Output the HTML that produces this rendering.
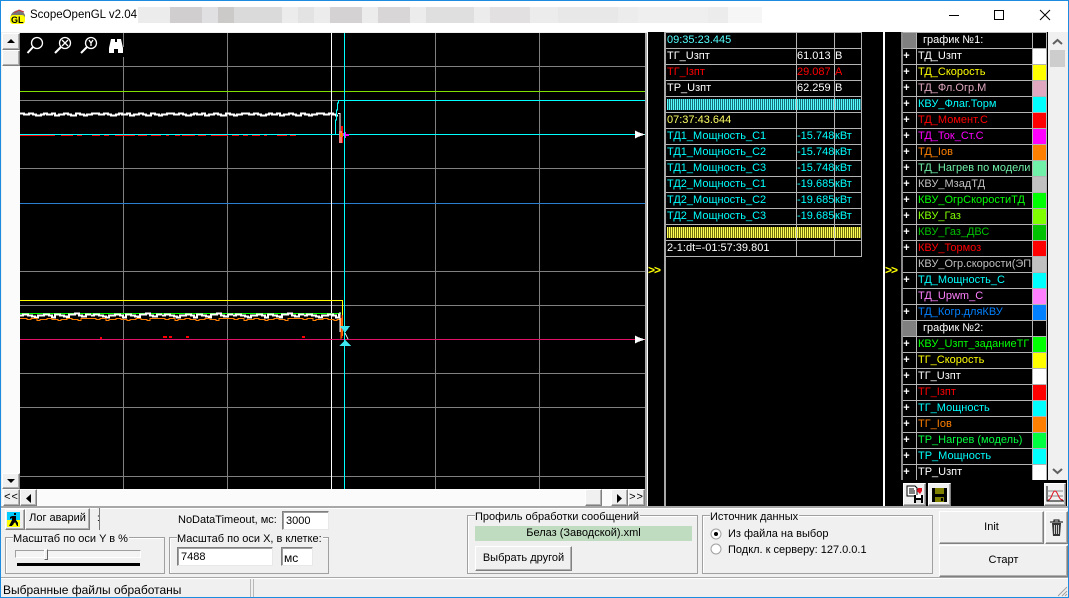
<!DOCTYPE html>
<html lang="ru"><head><meta charset="utf-8"><title>ScopeOpenGL v2.04</title>
<style>
html,body{margin:0;padding:0;background:#f0f0f0}
body{width:1069px;height:598px;position:relative;overflow:hidden;font:11px/14px "Liberation Sans",sans-serif;color:#000}
.a{position:absolute;white-space:nowrap}
.b{position:absolute;box-sizing:border-box;background:#f0f0f0;border:1px solid;border-color:#fff #808080 #808080 #fff;box-shadow:inset -1px -1px 0 #b0b0b0;text-align:center;white-space:nowrap}
.e{position:absolute;box-sizing:border-box;background:#fff;border:1px solid;border-color:#808080 #e8e8e8 #e8e8e8 #808080;box-shadow:inset 1px 1px 0 #a0a0a0;padding:2px 0 0 3px;white-space:nowrap}
.g{position:absolute;box-sizing:border-box;border:1px solid #a0a0a0;box-shadow:inset 1px 1px 0 #fff}
.l{position:absolute;background:#f0f0f0;white-space:nowrap;line-height:12px;padding-right:1px}
#t,#p{position:absolute;background:#000;color:#fff;font-size:11px;line-height:15px}
.r{position:absolute;left:0;right:0;height:15px;border-bottom:1px solid #b4b4b4;white-space:nowrap;overflow:hidden}
.r span{position:absolute;top:0;height:15px;overflow:hidden}
.vl{position:absolute;top:0;bottom:0;width:1px;background:#b4b4b4}
.cy{color:#0ff}
.hc{background:linear-gradient(90deg,#5ff 50%,#1a7078 50%) 0 0/2px 100%}
.hy{background:linear-gradient(90deg,#ff5 50%,#707010 50%) 0 0/2px 100%}
.n{left:15px;width:114px}
.k{left:0;width:7px;text-align:center;font-weight:bold;color:#fff}
.c{left:130px;width:13px;height:15px}
</style></head><body>

<!-- window frame -->
<div class="a" style="left:0;top:0;width:1069px;height:32px;background:#fff"></div>
<svg class="a" style="left:9px;top:7px" width="18" height="17" viewBox="0 0 18 17"><path d="M2 14A7 7 0 0 1 16 8L16 14Z" fill="#777"/><path d="M5 6l5-3 5 2" stroke="#c33" fill="none"/><rect x="1" y="8" width="15" height="9" rx="3" fill="#ff0"/><text x="2" y="16" font-family="Liberation Sans" font-size="9" font-weight="bold" fill="#000">GL</text></svg>
<div class="a" style="left:30px;top:8px;font-size:11.500px;line-height:15px">ScopeOpenGL v2.04</div>
<svg class="a" style="left:138px;top:7px" width="624" height="16"><rect width="624" height="16" fill="#ececec"/><rect x="32" width="32" height="16" fill="#d0cece"/><rect x="64" width="16" height="16" fill="#e0e0e2"/><rect x="80" width="16" height="16" fill="#ccc9c9"/><rect x="96" width="48" height="16" fill="#dbdada"/><rect x="160" width="16" height="16" fill="#e3e3e3"/><rect x="192" width="32" height="16" fill="#d4d2d2"/><rect x="240" width="32" height="16" fill="#d8d6d6"/><rect x="288" width="48" height="16" fill="#dfdfdf"/><rect x="352" width="40" height="16" fill="#e2e0e0"/><rect x="420" width="60" height="16" fill="#e8e8e8"/><rect x="500" width="70" height="16" fill="#efefef"/><rect x="590" width="34" height="16" fill="#f6f6f6"/></svg>
<svg class="a" style="left:940px;top:5px" width="120" height="22" fill="none" stroke="#000"><path d="M9 10.500H19"/><rect x="54.500" y="5.500" width="9" height="9"/><path d="M100 5L110 15M110 5L100 15"/></svg>

<!-- plot -->
<svg class="a" style="left:20px;top:33px;background:#000;shape-rendering:crispEdges" width="625" height="456" viewBox="20 33 625 456">
<g stroke="#808080" fill="none">
<path d="M20 66.500H645M20 100.500H340M20 168.500H645M20 271.500H645M20 305.500H645M20 373.500H645M20 407.500H645M20 476.500H645"/>
<path d="M123.500 33V489M227.500 33V489M435.500 33V489M539.500 33V489"/>
</g>
<rect x="122" y="47" width="3" height="10" fill="#000"/>
<path d="M20 91.500H645" stroke="#80e000"/>
<path d="M20 203.500H645" stroke="#2a7fd0"/>
<path d="M331.500 33V489" stroke="#fff"/>
<path d="M20 300.500H342.500V336" stroke="#ff0" fill="none"/>
<path d="M20 313.500H341" stroke="#0f0"/>
<defs>
<path id="n1" d="M0 113.500h4v1h5v-1h4v1h3v1h5v-1h3v-1h3v1h5v-1h3v2h4v-1h5v-1h4v1h3v1h5v-2h4v1h4v1h3v-1h5v-1h3"/>
<path id="n2" d="M0 315.500h3v-1h5v1h4v1h3v1h3v-2h6v-1h5v1h3v2h3v-3h5v1h4v1h3v1h2v-3h6v-1h4v2h3v1h4v-2h5"/>
<path id="n3" d="M0 318.500h7v1h4v-1h6v2h3v-1h7v-1h5v1h6v1h3v-1h6v-1h5v1h6v1h3v-2h8"/>
<clipPath id="cl"><rect x="20" y="300" width="320" height="30"/></clipPath>
<clipPath id="ct"><rect x="20" y="100" width="318" height="30"/></clipPath>
</defs>
<g fill="none" stroke="#fff" stroke-width="2" clip-path="url(#ct)">
<use href="#n1" x="20"/><use href="#n1" x="95"/><use href="#n1" x="170"/><use href="#n1" x="245"/><use href="#n1" x="320"/>
</g>
<g clip-path="url(#cl)">
<g fill="none" stroke="#fff" stroke-width="2">
<use href="#n2" x="20"/><use href="#n2" x="91"/><use href="#n2" x="162"/><use href="#n2" x="233"/><use href="#n2" x="304"/>
</g>
<g fill="none" stroke="#ff8000">
<use href="#n3" x="20"/><use href="#n3" x="89"/><use href="#n3" x="158"/><use href="#n3" x="227"/><use href="#n3" x="296"/>
</g>
</g>
<path d="M338 113.500h2V134" stroke="#fff" fill="none"/>
<path d="M340 312V332" stroke="#fff" fill="none"/>
<path d="M20 135.500h35m6 0h12m4 0h5m10 0h8m4 0h5m6 0h20m3 0h9m4 0h10m5 0h3m6 0h5m2 0h13m3 0h8m5 0h17m4 0h7m4 0h5m4 0h8m4 0h3m10 0h10m3 0h6" stroke="#f00" fill="none"/>
<path d="M100 338h2m61-1h4m2 0h3m14 0h3m113 0h3" stroke="#f00" stroke-width="2" fill="none"/>
<path d="M20 339.500H645" stroke="#e0106a"/>
<path d="M20 134.500H645M339 100.500H645" stroke="#0ff"/>
<path d="M335.500 134V120h1v-10h1V103h1v-3" stroke="#0ff" fill="none"/>
<path d="M341 126h2v17h-2z" fill="#f00"/>
<path d="M339 131h3v12h-3z" fill="#f08080"/>
<path d="M340 133h3v4h-3z" fill="#ff8000"/>
<path d="M343 133h2v-1h1v2h3v2h-3v2h-1v-2h-2z" fill="#f0f"/>
<path d="M342 315v23" stroke="#f00" fill="none"/>
<path d="M341 318v21" stroke="#ff8000" fill="none"/>
<path d="M344.500 33V489" stroke="#0ff"/>
<path d="M340 326H350L345 333Z" fill="#3fe8f0"/>
<path d="M345 340L351 346H339Z" fill="#3fe8f0"/>
<path d="M635 130.500l4 2 6 2-6 2-4 2Z" fill="#fff"/>
<path d="M635 335.500l4 2 6 2-6 2-4 2Z" fill="#fff"/>
<path d="M345 333l3 6" stroke="#fff"/>
</svg>
<svg class="a" style="left:26px;top:36px" width="102" height="20" fill="none" stroke="#fff" stroke-width="1.300">
<circle cx="11" cy="7" r="5.500"/><path d="M7 11L1.500 17" stroke-width="2"/>
<circle cx="39" cy="7" r="5.500"/><path d="M35 11L29 17" stroke-width="2"/><path d="M36 4l6 6M42 4l-6 6"/>
<circle cx="65" cy="7" r="5.500"/><path d="M61 11L55 17" stroke-width="2"/><path d="M63 4l2 3 2-3M65 7v3"/>
<path d="M85 3h4v3h2V3h4l2 9v5h-5v-4h-4v4h-5v-5Z" fill="#fff" stroke="none"/>
</svg>

<!-- left scrollbar -->
<div class="a" style="left:2px;top:33px;width:18px;height:456px;background:#fbfbfb"></div>
<div class="b" style="left:2px;top:33px;width:18px;height:17px"></div>
<svg class="a" style="left:6px;top:38px" width="10" height="6"><path d="M1 5H9L5 1Z"/></svg>
<div class="b" style="left:2px;top:50px;width:18px;height:16px"></div>
<div class="b" style="left:2px;top:473px;width:18px;height:16px"></div>
<svg class="a" style="left:6px;top:478px" width="10" height="6"><path d="M1 1H9L5 5Z"/></svg>

<!-- bottom scrollbar -->
<div class="a" style="left:2px;top:489px;width:643px;height:17px;background:#fbfbfb"></div>
<div class="b" style="left:3px;top:489px;width:17px;height:17px;line-height:14px;letter-spacing:1px">&lt;&lt;</div>
<div class="b" style="left:20px;top:489px;width:17px;height:17px"></div>
<svg class="a" style="left:26px;top:494px" width="6" height="9"><path d="M5 0V9L0 4.500Z"/></svg>
<div class="b" style="left:585px;top:489px;width:17px;height:17px"></div>
<div class="b" style="left:611px;top:489px;width:17px;height:17px"></div>
<svg class="a" style="left:617px;top:494px" width="6" height="9"><path d="M0 0V9L5 4.500Z"/></svg>
<div class="b" style="left:628px;top:489px;width:17px;height:17px;line-height:14px;letter-spacing:1px">&gt;&gt;</div>
<div class="a" style="left:645px;top:33px;width:2px;height:473px;background:#a8a8a8"></div>
<div class="a" style="left:647px;top:33px;width:1px;height:473px;background:#fff"></div>

<!-- middle -->
<div class="a" style="left:648px;top:32px;width:16px;height:474px;background:#000"></div>
<div class="a" style="left:648px;top:263px;color:#ff0;font-weight:bold;font-size:12px;letter-spacing:-1px">&gt;&gt;</div>
<div class="a" style="left:664px;top:32px;width:2px;height:474px;background:#a8a8a8"></div>
<div class="a" style="left:666px;top:32px;width:217px;height:1px;background:#000"></div>
<div class="a" style="left:666px;top:32px;width:196px;height:1px;background:#b4b4b4"></div>
<div id="t" style="left:666px;top:33px;width:217px;height:473px">
<div class="a" style="left:0;top:0;width:196px;height:224px;">
<div class="r" style="top:0"><span style="left:1px;color:#5ff">09:35:23.445</span></div>
<div class="r" style="top:16px"><span style="left:1px">ТГ_Uзпт</span><span style="left:131px">61.013</span><span style="left:169px">В</span></div>
<div class="r" style="top:32px;color:#f00"><span style="left:1px">ТГ_Iзпт</span><span style="left:131px">29.087</span><span style="left:169px">А</span></div>
<div class="r" style="top:48px"><span style="left:1px">ТР_Uзпт</span><span style="left:131px">62.259</span><span style="left:169px">В</span></div>
<div class="r" style="top:64px"><span class="hc" style="left:1px;top:2px;height:11px;width:195px"></span></div>
<div class="r" style="top:80px"><span style="left:1px;color:#ff6">07:37:43.644</span></div>
<div class="r cy" style="top:96px"><span style="left:1px">ТД1_Мощность_С1</span><span style="left:131px">-15.748</span><span style="left:169px">кВт</span></div>
<div class="r cy" style="top:112px"><span style="left:1px">ТД1_Мощность_С2</span><span style="left:131px">-15.748</span><span style="left:169px">кВт</span></div>
<div class="r cy" style="top:128px"><span style="left:1px">ТД1_Мощность_С3</span><span style="left:131px">-15.748</span><span style="left:169px">кВт</span></div>
<div class="r cy" style="top:144px"><span style="left:1px">ТД2_Мощность_С1</span><span style="left:131px">-19.685</span><span style="left:169px">кВт</span></div>
<div class="r cy" style="top:160px"><span style="left:1px">ТД2_Мощность_С2</span><span style="left:131px">-19.685</span><span style="left:169px">кВт</span></div>
<div class="r cy" style="top:176px"><span style="left:1px">ТД2_Мощность_С3</span><span style="left:131px">-19.685</span><span style="left:169px">кВт</span></div>
<div class="r" style="top:192px"><span class="hy" style="left:1px;top:2px;height:11px;width:195px"></span></div>
<div class="r" style="top:208px"><span style="left:1px">2-1:dt=-01:57:39.801</span></div>
<div class="vl" style="left:130px"></div><div class="vl" style="left:168px"></div><div class="vl" style="left:195px"></div>
</div>
</div>
<div class="a" style="left:883px;top:32px;width:2px;height:474px;background:#fff"></div>
<div class="a" style="left:885px;top:32px;width:16px;height:474px;background:#000"></div>
<div class="a" style="left:885px;top:263px;color:#ff0;font-weight:bold;font-size:12px;letter-spacing:-1px">&gt;&gt;</div>

<!-- right list -->
<div class="a" style="left:901px;top:32px;width:2px;height:448px;background:#8c8c8c"></div>
<div class="a" style="left:903px;top:32px;width:144px;height:1px;background:#b4b4b4"></div>
<div id="p" style="left:903px;top:33px;width:144px;height:447px;overflow:hidden">
<div class="r" style="top:0"><span style="left:0;width:13px;background:#808080"></span><span style="left:20px">график №1:</span></div>
<div class="r" style="top:16px"><span class="k">+</span><span class="n" style="color:#fff">ТД_Uзпт</span><span class="c" style="background:#fff"></span></div>
<div class="r" style="top:32px"><span class="k">+</span><span class="n" style="color:#ff0">ТД_Скорость</span><span class="c" style="background:#ff0"></span></div>
<div class="r" style="top:48px"><span class="k">+</span><span class="n" style="color:#e0a8c0">ТД_Фл.Огр.М</span><span class="c" style="background:#e0a8c0"></span></div>
<div class="r" style="top:64px"><span class="k">+</span><span class="n" style="color:#0ff">КВУ_Флаг.Торм</span><span class="c" style="background:#0ff"></span></div>
<div class="r" style="top:80px"><span class="k">+</span><span class="n" style="color:#f00">ТД_Момент.С</span><span class="c" style="background:#f00"></span></div>
<div class="r" style="top:96px"><span class="k">+</span><span class="n" style="color:#f0f">ТД_Ток_Ст.С</span><span class="c" style="background:#f0f"></span></div>
<div class="r" style="top:112px"><span class="k">+</span><span class="n" style="color:#ff8000">ТД_Iов</span><span class="c" style="background:#ff8000"></span></div>
<div class="r" style="top:128px"><span class="k">+</span><span class="n" style="color:#70f0a8">ТД_Нагрев по модели</span><span class="c" style="background:#70f0a8"></span></div>
<div class="r" style="top:144px"><span class="k">+</span><span class="n" style="color:#c0c0c0">КВУ_МзадТД</span><span class="c" style="background:#c0c0c0"></span></div>
<div class="r" style="top:160px"><span class="k">+</span><span class="n" style="color:#0f0">КВУ_ОгрСкоростиТД</span><span class="c" style="background:#0f0"></span></div>
<div class="r" style="top:176px"><span class="k">+</span><span class="n" style="color:#80ff00">КВУ_Газ</span><span class="c" style="background:#80ff00"></span></div>
<div class="r" style="top:192px"><span class="k">+</span><span class="n" style="color:#00c000">КВУ_Газ_ДВС</span><span class="c" style="background:#00c000"></span></div>
<div class="r" style="top:208px"><span class="k">+</span><span class="n" style="color:#f00">КВУ_Тормоз</span><span class="c" style="background:#f00"></span></div>
<div class="r" style="top:224px"><span class="n" style="color:#c0c0c0">КВУ_Огр.скорости(ЭП</span><span class="c" style="background:#c0c0c0"></span></div>
<div class="r" style="top:240px"><span class="k">+</span><span class="n" style="color:#0ff">ТД_Мощность_С</span><span class="c" style="background:#0ff"></span></div>
<div class="r" style="top:256px"><span class="n" style="color:#ff80ff">ТД_Upwm_С</span><span class="c" style="background:#ff80ff"></span></div>
<div class="r" style="top:272px"><span class="k">+</span><span class="n" style="color:#0080ff">ТД_Когр.дляКВУ</span><span class="c" style="background:#0080ff"></span></div>
<div class="r" style="top:288px"><span style="left:0;width:13px;background:#808080"></span><span style="left:20px">график №2:</span></div>
<div class="r" style="top:304px"><span class="k">+</span><span class="n" style="color:#0f0">КВУ_Uзпт_заданиеТГ</span><span class="c" style="background:#0f0"></span></div>
<div class="r" style="top:320px"><span class="k">+</span><span class="n" style="color:#ff0">ТГ_Скорость</span><span class="c" style="background:#ff0"></span></div>
<div class="r" style="top:336px"><span class="k">+</span><span class="n" style="color:#fff">ТГ_Uзпт</span><span class="c" style="background:#fff"></span></div>
<div class="r" style="top:352px"><span class="k">+</span><span class="n" style="color:#f00">ТГ_Iзпт</span><span class="c" style="background:#f00"></span></div>
<div class="r" style="top:368px"><span class="k">+</span><span class="n" style="color:#0ff">ТГ_Мощность</span><span class="c" style="background:#0ff"></span></div>
<div class="r" style="top:384px"><span class="k">+</span><span class="n" style="color:#ff8000">ТГ_Iов</span><span class="c" style="background:#ff8000"></span></div>
<div class="r" style="top:400px"><span class="k">+</span><span class="n" style="color:#00ff40">ТР_Нагрев (модель)</span><span class="c" style="background:#00ff40"></span></div>
<div class="r" style="top:416px"><span class="k">+</span><span class="n" style="color:#0ff">ТР_Мощность</span><span class="c" style="background:#0ff"></span></div>
<div class="r" style="top:432px"><span class="k">+</span><span class="n" style="color:#fff">ТР_Uзпт</span><span class="c" style="background:#fff"></span></div>
<div class="vl" style="left:13px"></div><div class="vl" style="left:129px"></div><div class="vl" style="left:143px"></div>
</div>
<div class="a" style="left:1047px;top:32px;width:1px;height:448px;background:#000"></div>
<div class="a" style="left:1048px;top:32px;width:19px;height:448px;background:#f0f0f0"></div>
<svg class="a" style="left:1051px;top:38px" width="13" height="8" fill="none" stroke="#606060" stroke-width="2"><path d="M2 6L6.500 2L11 6"/></svg>
<div class="a" style="left:1050px;top:50px;width:15px;height:17px;background:#cdcdcd"></div>
<svg class="a" style="left:1051px;top:467px" width="13" height="8" fill="none" stroke="#606060" stroke-width="2"><path d="M2 2L6.500 6L11 2"/></svg>
<div class="a" style="left:901px;top:480px;width:166px;height:26px;background:#000"></div>
<div class="b" style="left:903px;top:483px;width:23px;height:23px"></div>
<svg class="a" style="left:905px;top:485px" width="19" height="19"><path d="M2 1h8l2 2v8H2z" fill="#fff" stroke="#000"/><path d="M4 4h5M4 6h6M4 8h6" stroke="#000"/><path d="M9 10h9v8H9z" fill="#000"/><path d="M11 10h5v3h-5z" fill="#fff"/><path d="M11 15h5v3h-5z" fill="#ddd"/><path d="M13 3l4 0v3l-2 3-3-3z" fill="#e01020"/></svg>
<div class="b" style="left:928px;top:483px;width:23px;height:23px"></div>
<svg class="a" style="left:931px;top:487px" width="17" height="16"><path d="M1 1h15v14H1z" fill="#000"/><path d="M4 1h9v6H4z" fill="#808000"/><path d="M4 10h9v5H4z" fill="#808000"/><path d="M10 11h2v3h-2z" fill="#000"/></svg>
<div class="b" style="left:1044px;top:483px;width:22px;height:23px"></div>
<svg class="a" style="left:1046px;top:486px" width="18" height="17" fill="none"><path d="M1 0V15H18" stroke="#000"/><path d="M1 5H17M1 10H17" stroke="#888"/><path d="M2 14C6 14 6 5 9 5S12 14 17 14" stroke="#e01020"/></svg>

<!-- lower panel -->
<div class="a" style="left:1px;top:506px;width:1067px;height:2px;background:#a8a8a8;box-shadow:0 1px 0 #fff"></div>
<div class="b" style="left:5px;top:509px;width:20px;height:21px"></div>
<svg class="a" style="left:7px;top:512px;shape-rendering:crispEdges" width="13" height="15"><rect width="13" height="8" fill="#0cf"/><rect y="8" width="13" height="7" fill="#ff0"/><path d="M7 1h2v2H7zM5 4h4v4l2 3v3h-1l-2-4-3 4H2l3-6V6L3 7V5z" fill="#000"/></svg>
<div class="b" style="left:25px;top:508px;width:65px;height:22px;line-height:19px">Лог аварий</div>
<div class="a" style="left:97px;top:508px;width:3px;height:22px;border-right:1px solid #777;box-sizing:border-box;background:#f0f0f0;line-height:22px;font-size:10px">:</div>
<div class="a" style="left:178px;top:513px">NoDataTimeout, мс:</div>
<div class="e" style="left:282px;top:511px;width:47px;height:19px">3000</div>

<div class="g" style="left:5px;top:537px;width:160px;height:37px"></div>
<div class="l" style="left:13px;top:533px">Масштаб по оси Y в %</div>
<div class="a" style="left:15px;top:550px;width:126px;height:8px;box-sizing:border-box;background:#f4f4f4;border:1px solid;border-color:#a0a0a0 #fff #fff #a0a0a0"></div>
<div class="a" style="left:44px;top:549px;width:4px;height:11px;box-sizing:border-box;background:#f0f0f0;border:1px solid;border-color:#fff #666 #666 #fff"></div>
<div class="a" style="left:17px;top:563px;width:123px;height:3px;background:#000"></div>

<div class="g" style="left:169px;top:537px;width:160px;height:37px"></div>
<div class="l" style="left:177px;top:533px">Масштаб по оси X, в клетке:</div>
<div class="e" style="left:177px;top:547px;width:96px;height:19px">7488</div>
<div class="e" style="left:281px;top:547px;width:32px;height:19px;padding-top:3px;padding-left:2px;font-size:12px;color:#000">мс</div>

<div class="g" style="left:467px;top:515px;width:231px;height:59px"></div>
<div class="l" style="left:475px;top:511px">Профиль обработки сообщений</div>
<div class="a" style="left:475px;top:526px;width:217px;height:15px;background:#c0dcc0;text-align:center;line-height:15px">Белаз (Заводской).xml</div>
<div class="b" style="left:475px;top:546px;width:97px;height:25px;line-height:22px">Выбрать другой</div>

<div class="g" style="left:702px;top:515px;width:231px;height:59px"></div>
<div class="l" style="left:710px;top:511px">Источник данных</div>
<svg class="a" style="left:710px;top:528px" width="12" height="28"><circle cx="6" cy="6" r="5" fill="#fff" stroke="#a0a0a0"/><circle cx="6" cy="6" r="2" fill="#000"/><circle cx="6" cy="21" r="5" fill="#fff" stroke="#a0a0a0"/></svg>
<div class="a" style="left:728px;top:527px">Из файла на выбор</div>
<div class="a" style="left:728px;top:543px">Подкл. к серверу: 127.0.0.1</div>

<div class="b" style="left:939px;top:511px;width:105px;height:33px;line-height:30px">Init</div>
<div class="b" style="left:1045px;top:511px;width:23px;height:33px"></div>
<svg class="a" style="left:1049px;top:518px" width="15" height="19"><path d="M1 4h13M5 4V2h5v2" stroke="#000" fill="none"/><path d="M3 5h9l-1 13H4z" fill="#333"/><path d="M5.500 7v9M7.500 7v9M9.500 7v9" stroke="#ccc"/></svg>
<div class="b" style="left:939px;top:545px;width:129px;height:32px;line-height:29px">Старт</div>

<!-- status bar -->
<div class="a" style="left:1px;top:577px;width:1067px;height:1px;background:#a8a8a8"></div>
<div class="a" style="left:1px;top:578px;width:1067px;height:1px;background:#fff"></div>
<div class="a" style="left:1px;top:579px;width:250px;height:18px;border-right:1px solid #b8b8b8;box-sizing:border-box;padding:4px 0 0 2px;font-size:12px">Выбранные файлы обработаны</div>
<div class="a" style="left:253px;top:579px;width:1px;height:18px;background:#b8b8b8"></div>
<svg class="a" style="left:1057px;top:586px" width="11" height="11" stroke="#a0a0a0"><path d="M10 1L1 10M10 5L5 10M10 8L8 10"/></svg>

<!-- window border -->
<div class="a" style="left:0;top:0;width:1069px;height:598px;box-sizing:border-box;border:1px solid #1c8ce0"></div>
</body></html>
